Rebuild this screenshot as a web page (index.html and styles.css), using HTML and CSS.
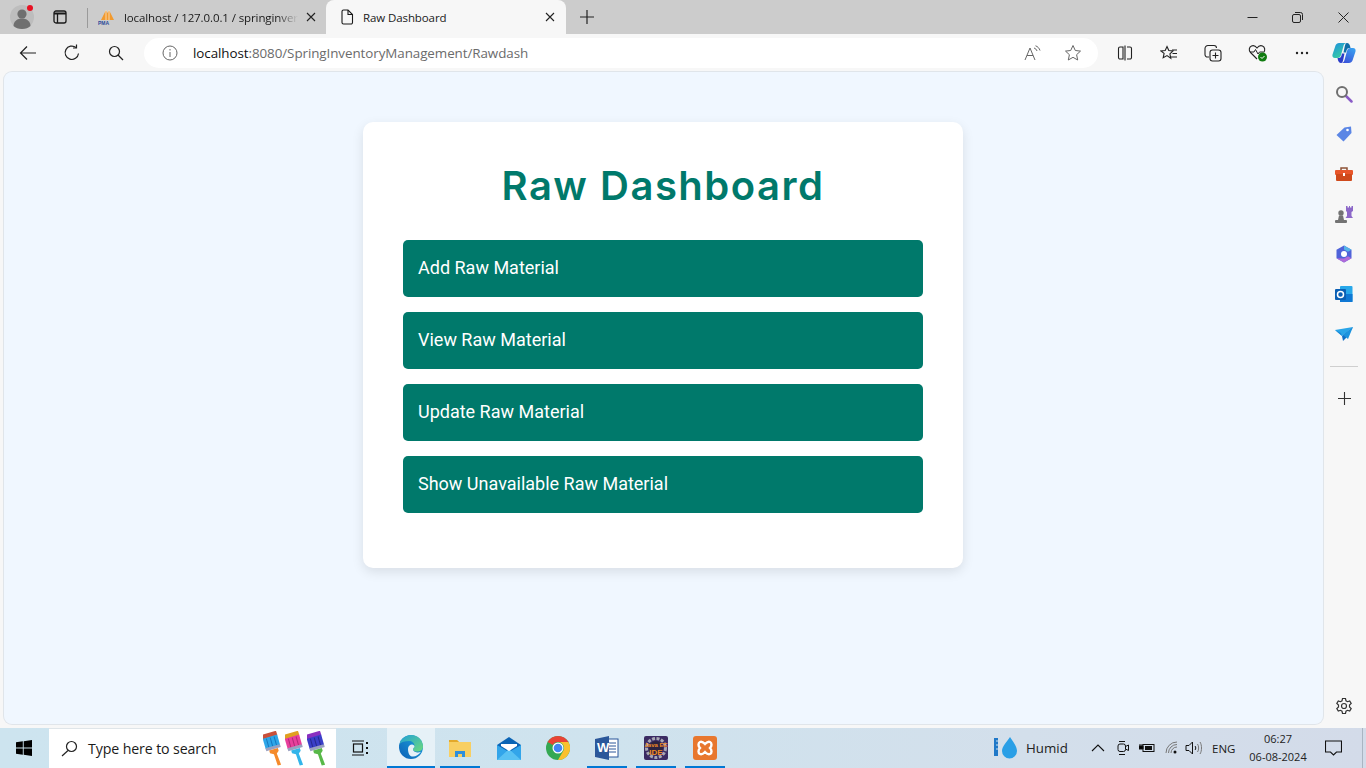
FILE: index.html
```html
<!DOCTYPE html>
<html lang="en">
<head>
<meta charset="utf-8">
<title>Raw Dashboard</title>
<link rel="stylesheet" href="styles.css">
</head>
<body>
<div class="tabstrip">
  <div class="strip-btn avatar">
    <svg width="26" height="26" viewBox="0 0 26 26"><circle cx="13" cy="13" r="12" fill="#bdbdbd"/><circle cx="13" cy="10" r="4.600" fill="#6f6f6f"/><path d="M4.500 22c0-5 4-7.500 8.500-7.500s8.500 2.500 8.500 7.500c-2 2-5 3-8.500 3s-6.500-1-8.500-3z" fill="#6f6f6f"/><circle cx="21" cy="4" r="3" fill="#e81123"/></svg>
  </div>
  <div class="strip-btn tabs-btn">
    <svg width="16" height="16" viewBox="0 0 16 16" fill="none" stroke="#1a1a1a" stroke-width="1.300"><rect x="2" y="2" width="12" height="12" rx="2"/><path d="M2 4.500h12" stroke-width="2"/><path d="M5.500 4v10"/></svg>
  </div>
  <div class="strip-sep"></div>
  <div class="tab">
    <svg class="fav" width="18" height="16" viewBox="0 0 18 16"><path d="M3 11 8 1l1.500 3L11 1l5 10z" fill="#f29a2e"/><path d="M8 1v10M11 1v10" stroke="#fff" stroke-width=".6"/><text x="0" y="16" class="pma">PMA</text></svg>
    <span class="tab-title fade">localhost / 127.0.0.1 / springinver</span>
    <svg class="x" width="10" height="10" viewBox="0 0 10 10"><path d="M1 1l8 8M9 1l-8 8" stroke="#222" stroke-width="1.100"/></svg>
  </div>
  <div class="tab active">
    <svg class="fav" width="14" height="16" viewBox="0 0 14 16" fill="none" stroke="#1a1a1a" stroke-width="1.100"><path d="M2 2.500A1.500 1.500 0 0 1 3.500 1H8l4.500 4.500v8A1.500 1.500 0 0 1 11 15H3.500A1.500 1.500 0 0 1 2 13.500z"/><path d="M8 1v4.500h4.500"/></svg>
    <span class="tab-title">Raw Dashboard</span>
    <svg class="x" width="10" height="10" viewBox="0 0 10 10"><path d="M1 1l8 8M9 1l-8 8" stroke="#222" stroke-width="1.100"/></svg>
  </div>
  <div class="newtab"><svg width="14" height="14" viewBox="0 0 14 14"><path d="M7 0v14M0 7h14" stroke="#222" stroke-width="1.200"/></svg></div>
  <div class="winctl">
    <div class="winbtn"><svg width="11" height="11" viewBox="0 0 11 11"><path d="M.5 5.500h10" stroke="#222"/></svg></div>
    <div class="winbtn"><svg width="11" height="11" viewBox="0 0 11 11" fill="none" stroke="#222"><rect x=".5" y="2.500" width="8" height="8" rx="1.500"/><path d="M3 .5h5.500a2 2 0 0 1 2 2V8"/></svg></div>
    <div class="winbtn"><svg width="11" height="11" viewBox="0 0 11 11"><path d="M.5.500l10 10M10.500.500l-10 10" stroke="#222"/></svg></div>
  </div>
</div>

<div class="toolbar">
  <div class="nav-btn"><svg width="18" height="16" viewBox="0 0 18 16" fill="none" stroke="#222" stroke-width="1.200"><path d="M17 8H1.500M8 1.500 1.500 8 8 14.500"/></svg></div>
  <div class="nav-btn"><svg width="18" height="18" viewBox="0 0 18 18" fill="none" stroke="#222" stroke-width="1.200"><path d="M15.500 9.500A6.700 6.700 0 1 1 13 3.500"/><path d="M13.500 .5v3.500H10"/></svg></div>
  <div class="nav-btn"><svg width="16" height="16" viewBox="0 0 16 16" fill="none" stroke="#222" stroke-width="1.200"><circle cx="6.500" cy="6.500" r="5"/><path d="M10 10l5 5"/></svg></div>
  <div class="pill">
    <svg class="info" width="16" height="16" viewBox="0 0 16 16" fill="none" stroke="#666"><circle cx="8" cy="8" r="7"/><path d="M8 7v5M8 4v1.500"/></svg>
    <span class="url"><span class="host">localhost</span>:8080/SpringInventoryManagement/Rawdash</span>
    <svg class="aloud" width="18" height="17" viewBox="0 0 18 17" fill="none" stroke="#666"><path d="M1 15 6 3l5 12M3 10.500h6"/><path d="M10 3c1.500.5 2.500 1.500 3 3M11.500 .8c2.200.7 3.800 2.400 4.500 4.700"/></svg>
    <svg class="star" width="18" height="18" viewBox="0 0 18 18" fill="none" stroke="#666"><path d="M9 1.500l2.300 5 5.200.6-3.900 3.600 1.100 5.300L9 13.300 4.300 16l1.100-5.300L1.500 7.100l5.200-.6z"/></svg>
  </div>
  <div class="tool-group">
    <div class="tool"><svg width="16" height="16" viewBox="0 0 16 16" fill="none" stroke="#222" stroke-width="1.100"><path d="M6 2H3a1.500 1.500 0 0 0-1.500 1.500v9A1.500 1.500 0 0 0 3 14h3zM10 2h3a1.500 1.500 0 0 1 1.500 1.500v9A1.500 1.500 0 0 1 13 14h-3M8 .5v15"/></svg></div>
    <div class="tool"><svg width="18" height="17" viewBox="0 0 18 17" fill="none" stroke="#222" stroke-width="1.100"><path d="M7 1.500l1.800 4 4.200.5-3.100 2.900.9 4.300L7 10.600 3.200 12.700l.9-4.300L1 6l4.200-.5z"/><path d="M12 5h5M12.500 8.500H17M11 12h6"/></svg></div>
    <div class="tool"><svg width="18" height="18" viewBox="0 0 18 18" fill="none" stroke="#222" stroke-width="1.100"><path d="M5 13H3.500A2.500 2.500 0 0 1 1 10.500V4.500A3 3 0 0 1 4 1.500h6a2.500 2.500 0 0 1 2.500 2.500"/><rect x="6" y="6" width="11" height="11" rx="2.500"/><path d="M11.500 8.500v6M8.500 11.500h6"/></svg></div>
    <div class="tool"><svg width="20" height="18" viewBox="0 0 20 18"><path d="M9 15 2.500 8.500C.5 6.500 1 3 3.500 2c2-.8 4 0 5.500 2 1.500-2 3.500-2.800 5.500-2 2.500 1 3 4.500 1 6.500" fill="none" stroke="#222" stroke-width="1.100"/><path d="M2 8h4l1.500-2.500L10 10l1.500-2H15" fill="none" stroke="#222"/><circle cx="14.500" cy="13" r="4.500" fill="#107c10"/><path d="M12.500 13l1.500 1.500 2.500-2.500" fill="none" stroke="#fff"/></svg></div>
    <div class="tool"><svg width="14" height="4" viewBox="0 0 14 4" fill="#222"><circle cx="2" cy="2" r="1.200"/><circle cx="7" cy="2" r="1.200"/><circle cx="12" cy="2" r="1.200"/></svg></div>
    <div class="tool copilot"><svg width="24" height="22" viewBox="0 0 24 22"><defs><linearGradient id="cpl" x1="0" y1="0" x2=".6" y2="1"><stop offset="0" stop-color="#1c8fe0"/><stop offset="1" stop-color="#3ad0a0"/></linearGradient><linearGradient id="cpr" x1=".8" y1="0" x2=".2" y2="1"><stop offset="0" stop-color="#3aa0f0"/><stop offset="1" stop-color="#3a4fd8"/></linearGradient></defs><path d="M7 1h8c-2 0-3 1-3.500 3L9 13c-.5 2-1.500 3-3.500 3H3C1 16 0 14.500.5 12.500L3.500 3.500C4 2 5.500 1 7 1z" fill="url(#cpl)"/><path d="M17 21H9c2 0 3-1 3.500-3L15 9c.5-2 1.500-3 3.500-3H21c2 0 3 1.500 2.500 3.500L20.500 18.500C20 20 18.500 21 17 21z" fill="url(#cpr)"/><path d="M15 1c1.800 0 3 1.500 3.500 5H17c-1.500 0-2 1-2.500 2.500l-.5 2H11.500l1-5C13 3 13.500 1 15 1z" fill="#0f6ea8"/><path d="M9 21c-1.800 0-3-1.500-3.500-5H7c1.500 0 2-1 2.500-2.500l.5-2h2.500l-1 5C11 19 10.500 21 9 21z" fill="#2a3cc8"/></svg></div>
  </div>
</div>

<div class="workspace">
  <main class="viewport">
    <section class="card">
      <h1 class="title">Raw Dashboard</h1>
      <a class="action">Add Raw Material</a>
      <a class="action">View Raw Material</a>
      <a class="action">Update Raw Material</a>
      <a class="action">Show Unavailable Raw Material</a>
    </section>
  </main>
  <aside class="sidebar">
    <div class="side-item"><svg width="18" height="18" viewBox="0 0 18 18" fill="none"><path d="M11 11l5.500 5.500" stroke="#8a5cc7" stroke-width="2.500" stroke-linecap="round"/><circle cx="7" cy="7" r="5" stroke="#6f6f6f" stroke-width="2"/></svg></div>
    <div class="side-item"><svg width="18" height="18" viewBox="0 0 18 18"><path d="M1.500 10 9.500 2.500 16 1.500 16.500 8l-8 8.500z" fill="#5b86e5"/><circle cx="12.500" cy="5" r="1.300" fill="#fff"/></svg></div>
    <div class="side-item"><svg width="18" height="16" viewBox="0 0 18 16"><path d="M6 4V2h6v2" fill="none" stroke="#8d5236" stroke-width="1.500"/><rect y="4" width="18" height="5" rx="1" fill="#e8562a"/><rect x="1" y="8" width="16" height="7" rx="1" fill="#cf4a1c"/><rect x="8" y="7" width="2" height="3" fill="#fff"/></svg></div>
    <div class="side-item"><svg width="18" height="18" viewBox="0 0 18 18"><path d="M11 1h1.500v1.500H14V1h1v1.500h1.500V1H18v5l-1.500 1v4l1.500 2H10.500l1.500-2V7l-1-1z" fill="#8c68c8"/><circle cx="6" cy="8" r="2.700" fill="#737373"/><path d="M4 10.500h4L9 15H3z" fill="#737373"/><rect y="15" width="12" height="3" rx="1" fill="#737373"/></svg></div>
    <div class="side-item"><svg width="18" height="18" viewBox="0 0 18 18"><path d="M9 .5l7.500 4.200v8.600L9 17.500 1.500 13.300V4.700z" fill="#4f63d9"/><path d="M9 .5l7.500 4.200-3.500 2L9 4.500z" fill="#55b4e8"/><path d="M1.500 13.300 9 17.500l7.500-4.200-3.500-2L9 13.500z" fill="#b06ad9"/><circle cx="9" cy="9" r="3" fill="#fff"/></svg></div>
    <div class="side-item"><svg width="18" height="18" viewBox="0 0 18 18"><rect x="5" y="1" width="12.500" height="16" rx="1" fill="#28a8ea"/><path d="M5 9h12.500v8H5z" fill="#0f78d4"/><rect y="4" width="11" height="11" rx="1" fill="#0a5fb4"/><circle cx="5.500" cy="9.500" r="3" fill="none" stroke="#fff" stroke-width="1.500"/></svg></div>
    <div class="side-item"><svg width="18" height="16" viewBox="0 0 18 16"><path d="M0 4 18 1 7 10z" fill="#29a5e8"/><path d="M18 1 7 10l1 5 3-3z" fill="#0f6fc6"/><path d="M0 4l6 3 1 3z" fill="#1a8ad9"/><path d="M18 1l-5 12-5-4z" fill="#1b93de"/></svg></div>
    <div class="side-rule"></div>
    <div class="side-item"><svg width="13" height="13" viewBox="0 0 13 13"><path d="M6.500 0v13M0 6.500h13" stroke="#333" stroke-width="1.100"/></svg></div>
    <div class="side-item gear"><svg width="18" height="18" viewBox="0 0 18 18" fill="none" stroke="#333" stroke-width="1.200"><circle cx="9" cy="9" r="2.500"/><path d="M7.500 1.500h3l.5 2.300 1.500.9 2.200-.8 1.500 2.600-1.700 1.600v1.800l1.700 1.600-1.500 2.600-2.200-.8-1.500.9-.5 2.300h-3l-.5-2.300-1.500-.9-2.200.8-1.500-2.600 1.700-1.600V8.100L1.800 6.500l1.500-2.600 2.200.8 1.500-.9z"/></svg></div>
  </aside>
</div>

<footer class="taskbar">
  <div class="start"><svg width="16" height="16" viewBox="0 0 16 16" fill="#000"><path d="M0 2.300 6.800 1.300v6.200H0zM7.700 1.200 16 0v7.500H7.700zM0 8.400h6.800v6.300L0 13.700zM7.700 8.400H16V16l-8.300-1.200z"/></svg></div>
  <div class="searchbox">
    <svg class="lens" width="17" height="17" viewBox="0 0 17 17" fill="none" stroke="#222" stroke-width="1.200"><circle cx="10.500" cy="6.500" r="5"/><path d="M7 10.500 1 16"/></svg>
    <span class="search-text">Type here to search</span>
    <div class="brushes">
      <svg width="22" height="36" viewBox="0 0 22 36"><g transform="rotate(-16 11 18)"><rect x="3" y="1" width="15" height="5" rx="1" fill="#c9503a"/><rect x="3" y="5" width="15" height="11" fill="#2ea6e8"/><path d="M6.500 6v9M10.500 6v9M14.500 6v9" stroke="#1778c0"/><rect x="3" y="15" width="15" height="3" fill="#9aa0c0"/><path d="M6 18h9v3l-2.500 2 1 12h-3.500l-.5-12L6 21z" fill="#f58a2a"/></g></svg>
      <svg width="22" height="36" viewBox="0 0 22 36"><g transform="rotate(-16 11 18)"><rect x="3" y="1" width="15" height="5" rx="1" fill="#e0a020"/><rect x="3" y="5" width="15" height="11" fill="#e83f9c"/><path d="M6.500 6v9M10.500 6v9M14.500 6v9" stroke="#b02a78"/><rect x="3" y="15" width="15" height="3" fill="#9aa0c0"/><path d="M6 18h9v3l-2.500 2 1 12h-3.500l-.5-12L6 21z" fill="#33b5ea"/></g></svg>
      <svg width="22" height="36" viewBox="0 0 22 36"><g transform="rotate(-16 11 18)"><rect x="3" y="1" width="15" height="5" rx="1" fill="#8a2fc0"/><rect x="3" y="5" width="15" height="11" fill="#3a3fc8"/><path d="M6.500 6v9M10.500 6v9M14.500 6v9" stroke="#26298f"/><rect x="3" y="15" width="15" height="3" fill="#9aa0c0"/><path d="M6 18h9v3l-2.500 2 1 12h-3.500l-.5-12L6 21z" fill="#58b848"/></g></svg>
    </div>
  </div>
  <div class="taskview"><svg width="18" height="16" viewBox="0 0 18 16" fill="none" stroke="#111" stroke-width="1.200"><path d="M1 1h12M1 15h12"/><rect x="2.500" y="4" width="9" height="8"/><path d="M16 2v2M16 7v2M16 12v2" stroke-width="2"/></svg></div>
  <div class="apps">
    <div class="app current"><svg width="24" height="24" viewBox="0 0 24 24"><defs><linearGradient id="edgeg" x1="0" y1="1" x2="1" y2="0"><stop offset="0" stop-color="#0b5fb5"/><stop offset="1" stop-color="#1fa8e0"/></linearGradient><linearGradient id="edgeh" x1="0" y1="0" x2="1" y2="1"><stop offset="0" stop-color="#1f9fd8"/><stop offset="1" stop-color="#6edb7c"/></linearGradient></defs><circle cx="12" cy="12" r="12" fill="url(#edgeg)"/><path d="M.5 9C2 3.500 7 0 12 0c7 0 12 5.500 12 11.500 0 3-2.500 5-6 5-2 0-4-.5-4-2 0-1 1.500-1.500 1.500-3.500C15.500 8 13 6 10 6 6 6 2 7 .5 9z" fill="url(#edgeh)"/><path d="M9 14c0-3 2-4.500 4-4.500 1.500 0 2.500 1 2.500 2 0 1-1.500 1.500-1.500 3 0 2 3 3 5 3 1 0 2-.2 3-.7C19.500 20.500 16 22 13 21.500 10 21 9 17 9 14z" fill="#e6f1f7"/></svg></div>
    <div class="app mark"><svg width="22" height="20" viewBox="0 0 22 20"><path d="M0 2h8l2 2h12v15H0z" fill="#f8cf62"/><path d="M0 2h8l2 2H0z" fill="#e3a92a"/><path d="M6 13h10v6H6z" fill="#2f8fdc"/><path d="M9 16h4v3H9z" fill="#f8cf62"/></svg></div>
    <div class="app"><svg width="24" height="23" viewBox="0 0 24 23"><path d="M0 8 12 0l12 8v15H0z" fill="#0a64b5"/><path d="M0 8l12 7 12-7v15H0z" fill="#32a5ea"/><path d="M0 23l12-11 12 11z" fill="#58c1f3"/><path d="M4 9V7h16v2l-8 5z" fill="#fff"/></svg></div>
    <div class="app"><svg width="24" height="24" viewBox="0 0 24 24"><circle cx="12" cy="12" r="12" fill="#34a853"/><path d="M12 0a12 12 0 0 1 10.400 6H12a6 6 0 0 0-5.200 3L1.600 6A12 12 0 0 1 12 0z" fill="#e94335"/><path d="M22.400 6A12 12 0 0 1 12 24l5.200-9A6 6 0 0 0 12 6z" fill="#fbc02d"/><circle cx="12" cy="12" r="5.500" fill="#fff"/><circle cx="12" cy="12" r="4.300" fill="#4285f4"/></svg></div>
    <div class="app mark"><svg width="24" height="24" viewBox="0 0 24 24"><rect x="10" y="3" width="13" height="18" fill="#fff" stroke="#2b579a"/><path d="M14 7h7M14 10h7M14 13h7M14 16h7" stroke="#2b579a"/><path d="M0 3 14 0v24L0 21z" fill="#2b579a"/><text x="2" y="16" class="word">W</text></svg></div>
    <div class="app mark"><svg width="24" height="24" viewBox="0 0 24 24"><rect width="24" height="24" rx="2" fill="#3b2b63"/><circle cx="12" cy="12" r="9.500" fill="none" stroke="#a8a8b4" stroke-width="3" stroke-dasharray="3 1.500"/><circle cx="12" cy="12" r="7" fill="#2e2340"/><text x="12" y="11" class="ee">Java EE</text><text x="12" y="19" class="ee big">IDE</text></svg></div>
    <div class="app mark"><svg width="24" height="24" viewBox="0 0 24 24"><rect width="24" height="24" rx="3" fill="#e8772e"/><path d="M7 6c2-1 3 0 5 2 2-2 3-3 5-2s2 4 0 6c2 2 2 5 0 6s-3 0-5-2c-2 2-3 3-5 2s-2-4 0-6c-2-2-2-5 0-6z" fill="none" stroke="#fff" stroke-width="2.400"/></svg></div>
  </div>
  <div class="tray">
    <div class="weather">
      <svg width="26" height="24" viewBox="0 0 26 24"><path d="M1 2h4v18H1z" fill="#1f78c8"/><path d="M3 5h2M3 9h2M3 13h2" stroke="#cfe0ee"/><path d="M17 1c3 5 7 9 7 14a7.500 7.500 0 0 1-15 0C9 10 14 6 17 1z" fill="#2a9fe6"/></svg>
      <span class="humid">Humid</span>
    </div>
    <svg class="chev" width="14" height="8" viewBox="0 0 14 8" fill="none" stroke="#111" stroke-width="1.100"><path d="M1 7l6-6 6 6"/></svg>
    <svg class="cam" width="12" height="16" viewBox="0 0 12 16" fill="none" stroke="#111"><rect x="1" y="4" width="7.500" height="7.500" rx="2"/><path d="M8.500 6.500 11.500 5v5.500l-3-1.500M2 1.500h6M2 14.500h6"/></svg>
    <svg class="batt" width="16" height="10" viewBox="0 0 16 10"><rect x="4" y="1.500" width="11" height="7" fill="none" stroke="#111"/><rect x="6" y="3" width="7" height="4" fill="#111"/><path d="M0 3h4v3H0zM1 1v2M3 1v2" stroke="#111"/></svg>
    <svg class="wifi" width="14" height="14" viewBox="0 0 14 14" fill="none" stroke="#777"><path d="M1 12A11 11 0 0 1 12 1M3.500 12A8.500 8.500 0 0 1 12 3.500M6 12a6 6 0 0 1 6-6"/><circle cx="10" cy="11" r="1.500" fill="#111" stroke="none"/></svg>
    <svg class="vol" width="17" height="14" viewBox="0 0 17 14" fill="none" stroke="#111"><path d="M1 4.500h3L7.500 1v12L4 9.500H1z"/><path d="M10 5c1 1 1 3 0 4"/><path d="M12.500 3c1.500 2 1.500 6 0 8M15 1c2 3 2 9 0 12" stroke="#777"/></svg>
    <span class="lang">ENG</span>
    <div class="clock"><span>06:27</span><span>06-08-2024</span></div>
    <svg class="notif" width="17" height="16" viewBox="0 0 17 16" fill="none" stroke="#111" stroke-width="1.100"><path d="M.5 1h16v11h-5l-3 3-3-3h-5z"/></svg>
    <div class="peek"></div>
  </div>
</footer>
</body>
</html>
```
FILE: styles.css
```css
* { box-sizing: border-box; }
html, body { margin: 0; height: 768px; overflow: hidden; }
body { width: 1366px; background: #f7f7f7; font-family: "Open Sans", "Liberation Sans", sans-serif; color: #1a1a1a; }
svg { display: block; flex: none; }

.tabstrip { height: 34px; background: #cccccc; display: flex; align-items: stretch; }
.strip-btn { display: flex; align-items: center; justify-content: center; }
.avatar { width: 32px; margin-left: 6px; }
.tabs-btn { width: 44px; }
.strip-sep { width: 1px; height: 20px; margin: 8px 0 0 5px; background: #9a9a9a; }
.tab { width: 238px; display: flex; align-items: center; padding: 0 10px; font-size: 11.500px; }
.tab .fav { margin-right: 8px; }
.tab-title { flex: 1; min-width: 0; white-space: nowrap; letter-spacing: -.1px; }
.fade { -webkit-mask-image: linear-gradient(90deg, #000 88%, transparent); mask-image: linear-gradient(90deg, #000 88%, transparent); }
.tab .x { margin-left: 8px; }
.tab.active { width: 240px; background: #f7f7f7; border-radius: 8px 8px 0 0; padding: 0 11px 0 14px; }
.tab.active .fav { margin-right: 9px; }
.pma { font: 700 5px "Liberation Sans", sans-serif; fill: #2a4a9a; }
.newtab { width: 42px; display: flex; align-items: center; justify-content: center; }
.winctl { margin-left: auto; display: flex; }
.winbtn { width: 46px; display: flex; align-items: center; justify-content: center; }
.winbtn:first-child { margin-right: -1px; }

.toolbar { height: 38px; display: flex; align-items: center; padding: 2px 0 2px 6px; }
.nav-btn { width: 44px; height: 30px; display: flex; align-items: center; justify-content: center; }
.pill { flex: 1; height: 30px; margin-left: 6px; background: #fff; border-radius: 15px; display: flex; align-items: center; padding: 0 16px 0 18px; }
.info { margin-right: 15px; }
.url { flex: 1; font-size: 13.400px; color: #6b6b6b; letter-spacing: -.07px; white-space: nowrap; }
.host { color: #111; }
.aloud { margin-right: 22px; }
.tool-group { width: 268px; padding-left: 5px; display: flex; align-items: center; }
.tool { width: 44.200px; height: 30px; display: flex; align-items: center; justify-content: center; }
.tool.copilot { width: 40px; }

.workspace { height: 656px; display: flex; }
.viewport { width: 1319px; height: 652px; margin-left: 4px; background: #f0f7ff; border-radius: 8px; box-shadow: 0 0 0 1px #e0e5ea; display: flex; justify-content: center; align-items: flex-start; padding: 50px 1px 0 0; }
.card { width: 600px; height: 446px; background: #fff; border-radius: 10px; padding: 40px; box-shadow: 0 4px 12px rgba(0, 0, 0, .1); }
.title { margin: 0 0 30px; height: 48px; text-align: center; color: #00796b; font: 600 40px/48px Inter, "Liberation Sans", sans-serif; letter-spacing: 1.500px; }
.action { display: block; height: 57px; margin-bottom: 15px; padding: 14px 15px 16px; background: #00796b; color: #fff; border-radius: 5px; font: 400 18px/27px Roboto, sans-serif; }

.sidebar { width: 43px; height: 652px; display: flex; flex-direction: column; align-items: center; padding: 2px 1px 0 0; }
.side-item { height: 40px; width: 100%; display: flex; align-items: center; justify-content: center; flex: none; }
.side-rule { width: 28px; height: 1px; background: #cfcfcf; margin: 12px 0 11px; flex: none; }
.gear { margin-top: auto; margin-bottom: -2px; }

.taskbar { height: 40px; display: flex; align-items: stretch; background: linear-gradient(90deg, #cde4ef 0%, #cfe3ee 45%, #d3dfeb 75%, #d3dbe9 100%); }
.start { width: 48px; display: flex; align-items: center; justify-content: center; }
.searchbox { width: 287px; margin-left: 1px; background: #fff; border-top: 1px solid #dfe5e9; display: flex; align-items: center; padding-left: 12px; }
.search-text { margin-left: 10px; font-size: 14.200px; color: #1b1b1b; letter-spacing: -.12px; white-space: nowrap; }
.brushes { margin-left: auto; margin-right: 7px; display: flex; gap: 0; }
.taskview { width: 47px; display: flex; align-items: center; justify-content: center; }
.apps { display: flex; gap: 1px; margin-left: 4px; }
.app { width: 48px; display: flex; align-items: center; justify-content: center; position: relative; }
.app.current { background: #e6f1f7; border-bottom: 2px solid #0078d4; }
.app.mark::after { content: ""; position: absolute; left: 4px; right: 4px; bottom: 0; height: 2px; background: #0078d4; }
.word { font: 700 13px "Liberation Sans", sans-serif; fill: #fff; }
.ee { font: 700 6px "Liberation Sans", sans-serif; fill: #f08a24; text-anchor: middle; }
.ee.big { font-size: 8px; }

.tray { margin-left: auto; display: flex; align-items: center; width: 374px; }
.weather { display: flex; align-items: center; width: 99px; padding-left: 1px; font-size: 13.300px; }
.humid { margin-left: 7px; color: #222; }
.cam { margin-left: 12px; }
.batt { margin-left: 10px; }
.wifi { margin-left: 10px; }
.vol { margin-left: 6px; }
.lang { margin-left: 10px; font-size: 11.500px; width: 26px; }
.clock { width: 78px; margin-left: 1px; display: flex; flex-direction: column; align-items: center; font-size: 11px; line-height: 18px; color: #222; }
.notif { margin-left: 8px; }
.peek { width: 1px; height: 40px; margin-left: 20px; background: #aab5c2; }
```
